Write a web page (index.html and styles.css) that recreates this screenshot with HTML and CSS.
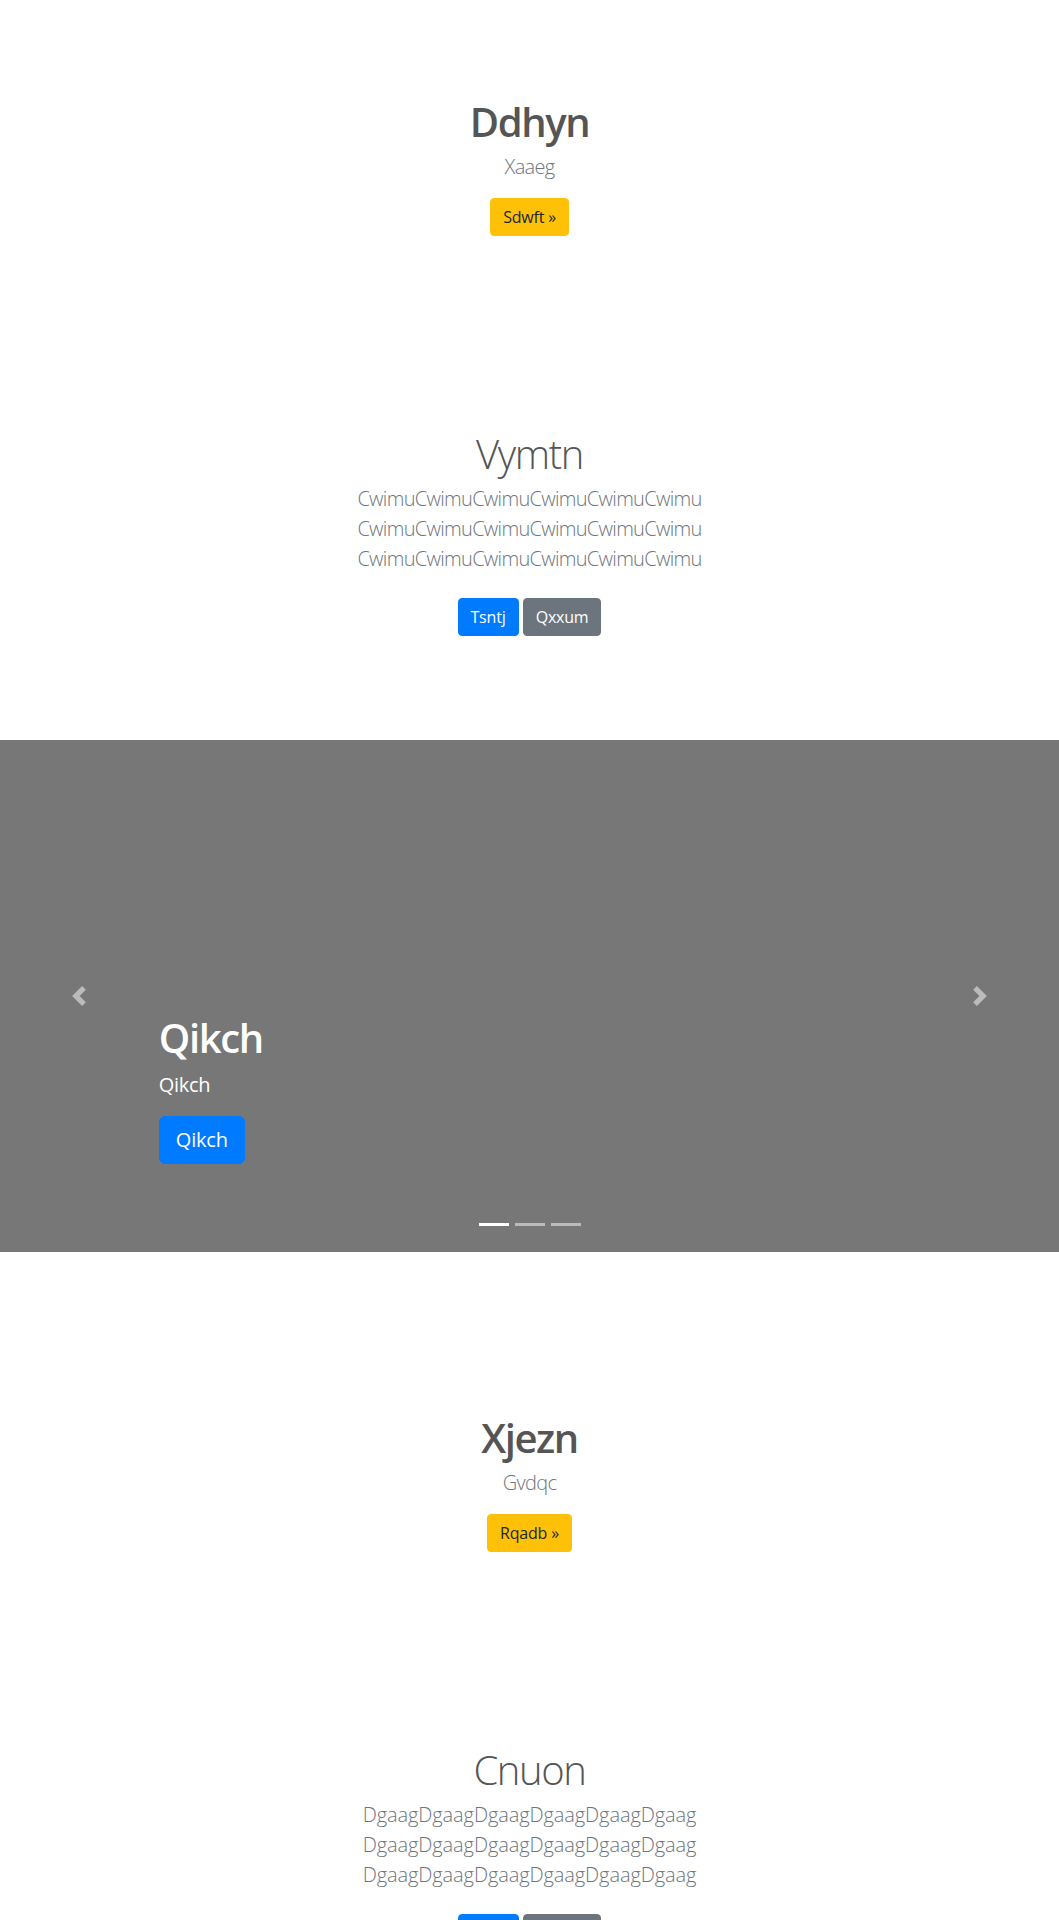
FILE: index.html
```html
<!DOCTYPE html>
<html lang="en">
<head>
<meta charset="utf-8">
<title>Page</title>
<link rel="stylesheet" href="styles.css">
</head>
<body>
<main>
  <section class="hero">
    <h1 class="hero-title">Ddhyn</h1>
    <p class="lead">Xaaeg</p>
    <p class="actions"><a class="btn btn-warning" href="#">Sdwft &raquo;</a></p>
  </section>

  <section class="hero">
    <h1 class="hero-title light">Vymtn</h1>
    <p class="lead">CwimuCwimuCwimuCwimuCwimuCwimu<br>CwimuCwimuCwimuCwimuCwimuCwimu<br>CwimuCwimuCwimuCwimuCwimuCwimu</p>
    <p class="actions"><a class="btn btn-primary spaced" href="#">Tsntj</a> <a class="btn btn-secondary spaced" href="#">Qxxum</a></p>
  </section>

  <div class="carousel">
    <ol class="indicators">
      <li class="active"></li>
      <li></li>
      <li></li>
    </ol>
    <div class="caption">
      <h1>Qikch</h1>
      <p class="caption-text">Qikch</p>
      <p class="caption-actions"><a class="btn btn-lg btn-primary" href="#">Qikch</a></p>
    </div>
    <a class="control prev" href="#">
      <svg width="20" height="20" viewBox="0 0 8 8" fill="#fff"><path d="M5.25 0l-4 4 4 4 1.5-1.5L4.25 4l2.5-2.5L5.25 0z"/></svg>
    </a>
    <a class="control next" href="#">
      <svg width="20" height="20" viewBox="0 0 8 8" fill="#fff"><path d="M2.75 0l-1.5 1.5L3.75 4l-2.5 2.5L2.75 8l4-4-4-4z"/></svg>
    </a>
  </div>

  <section class="hero">
    <h1 class="hero-title">Xjezn</h1>
    <p class="lead">Gvdqc</p>
    <p class="actions"><a class="btn btn-warning" href="#">Rqadb &raquo;</a></p>
  </section>

  <section class="hero">
    <h1 class="hero-title light">Cnuon</h1>
    <p class="lead lead-wide">DgaagDgaagDgaagDgaagDgaagDgaag<br>DgaagDgaagDgaagDgaagDgaagDgaag<br>DgaagDgaagDgaagDgaagDgaagDgaag</p>
    <p class="actions"><a class="btn btn-primary spaced" href="#">Tsntj</a> <a class="btn btn-secondary spaced" href="#">Qxxum</a></p>
  </section>
</main>
</body>
</html>
```

FILE: styles.css
```css
* { box-sizing: border-box; }

body {
  margin: 0;
  font-family: "Open Sans", "Noto Sans", "Liberation Sans", sans-serif;
  font-size: 16px;
  line-height: 1.5;
  color: #212529;
  background: #fff;
}

.hero {
  padding: 96px 0;
  text-align: center;
}

.hero-title {
  margin: 0 0 8px;
  padding-top: 2px;
  height: 48px;
  font-size: 40px;
  line-height: 1.2;
  font-weight: 600;
  letter-spacing: -1.4px;
  color: #555;
}

.hero-title.light {
  font-weight: 300;
}

.lead {
  margin: 0 0 16px;
  font-size: 20px;
  line-height: 1.5;
  font-weight: 300;
  letter-spacing: -0.7px;
  color: #6c757d;
}

.lead-wide {
  letter-spacing: -0.1px;
}

.actions {
  margin: 0;
}

.btn {
  display: inline-block;
  padding: 6px 12px;
  font-size: 16px;
  line-height: 1.5;
  font-weight: 400;
  letter-spacing: -0.2px;
  border: 1px solid transparent;
  border-radius: 4px;
  text-decoration: none;
  vertical-align: middle;
}

.btn.spaced {
  margin: 8px 0;
}

.btn-warning { background: #ffc107; border-color: #ffc107; color: #212529; }
.btn-primary { background: #007bff; border-color: #007bff; color: #fff; }
.btn-secondary { background: #6c757d; border-color: #6c757d; color: #fff; }

.btn-lg {
  padding: 8px 16px;
  font-size: 20px;
  line-height: 1.5;
  border-radius: 6px;
}

.carousel {
  position: relative;
  height: 512px;
  margin-bottom: 64px;
  background: #777;
  overflow: hidden;
}

.caption {
  position: absolute;
  left: 15%;
  right: 15%;
  bottom: 52px;
  padding: 20px 0;
  color: #fff;
  text-align: left;
  z-index: 10;
}

.caption h1 {
  margin: 0 0 8px;
  font-size: 40px;
  line-height: 1.2;
  font-weight: 600;
  letter-spacing: -1.4px;
}

.caption-text {
  margin: 0 0 16px;
  font-size: 20px;
  line-height: 1.5;
  letter-spacing: -0.3px;
}

.caption-actions {
  margin: 0 0 16px;
  line-height: 48px;
  height: 48px;
}

.caption-actions .btn {
  vertical-align: top;
}

.control {
  position: absolute;
  top: 0;
  bottom: 0;
  width: 15%;
  display: flex;
  align-items: center;
  justify-content: center;
  opacity: 0.5;
  z-index: 5;
}

.control svg { display: block; }

.control.prev { left: 0; }
.control.next { right: 0; }

.indicators {
  position: absolute;
  left: 0;
  right: 0;
  bottom: 0;
  margin: 0 0 16px;
  padding: 0;
  list-style: none;
  display: flex;
  justify-content: center;
  z-index: 15;
}

.indicators li {
  width: 30px;
  height: 23px;
  margin: 0 3px;
  border-top: 10px solid transparent;
  border-bottom: 10px solid transparent;
  background: #fff;
  background-clip: padding-box;
  opacity: 0.5;
}

.indicators li.active {
  opacity: 1;
}
```
